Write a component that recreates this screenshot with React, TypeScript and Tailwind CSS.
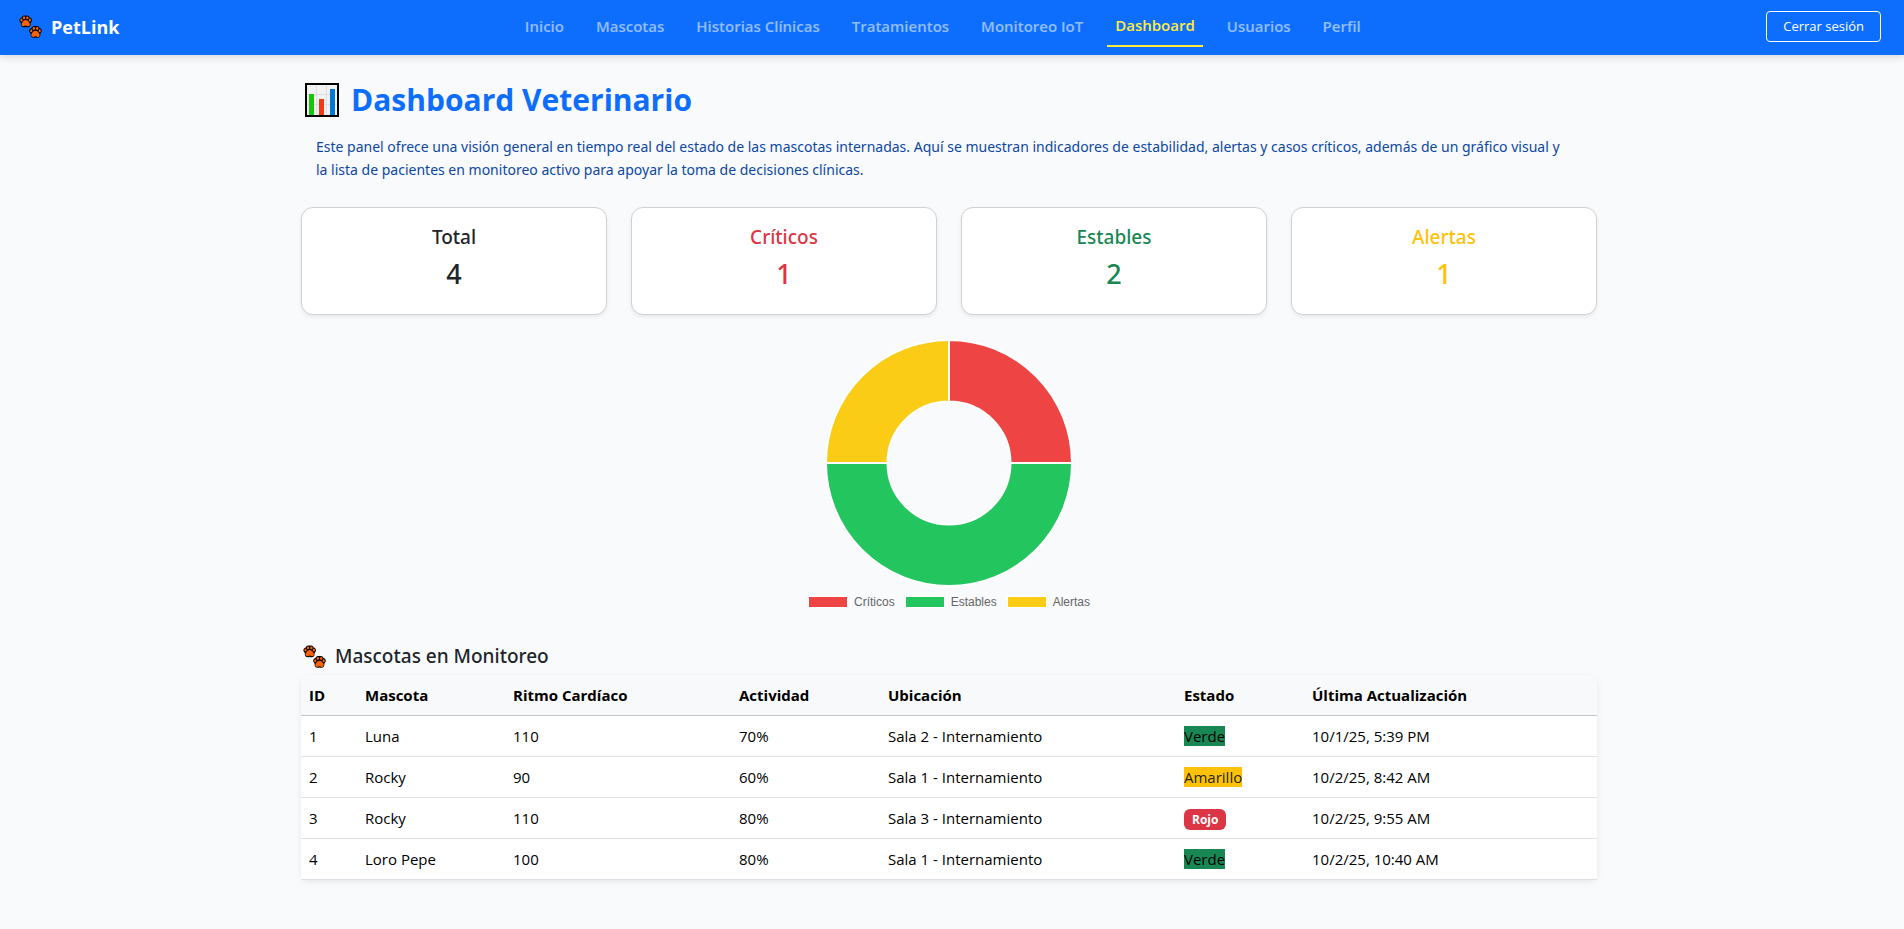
import React from "react";

const navItems = [
  "Inicio",
  "Mascotas",
  "Historias Clínicas",
  "Tratamientos",
  "Monitoreo IoT",
  "Dashboard",
  "Usuarios",
  "Perfil",
];

const stats = [
  { label: "Total", value: 4, color: "text-[#212529]" },
  { label: "Críticos", value: 1, color: "text-[#dc3545]" },
  { label: "Estables", value: 2, color: "text-[#198754]" },
  { label: "Alertas", value: 1, color: "text-[#ffc107]" },
];

const legend = [
  { label: "Críticos", color: "bg-[#ef4444]" },
  { label: "Estables", color: "bg-[#22c55e]" },
  { label: "Alertas", color: "bg-[#facc15]" },
];

const columns = [
  { label: "ID", width: "w-14" },
  { label: "Mascota", width: "w-[148px]" },
  { label: "Ritmo Cardíaco", width: "w-[226px]" },
  { label: "Actividad", width: "w-[149px]" },
  { label: "Ubicación", width: "w-[296px]" },
  { label: "Estado", width: "w-32" },
  { label: "Última Actualización", width: "w-auto" },
];

const pets = [
  { id: 1, name: "Luna", rate: 110, activity: "70%", place: "Sala 2 - Internamiento", state: "Verde", updated: "10/1/25, 5:39 PM" },
  { id: 2, name: "Rocky", rate: 90, activity: "60%", place: "Sala 1 - Internamiento", state: "Amarillo", updated: "10/2/25, 8:42 AM" },
  { id: 3, name: "Rocky", rate: 110, activity: "80%", place: "Sala 3 - Internamiento", state: "Rojo", updated: "10/2/25, 9:55 AM" },
  { id: 4, name: "Loro Pepe", rate: 100, activity: "80%", place: "Sala 1 - Internamiento", state: "Verde", updated: "10/2/25, 10:40 AM" },
];

const stateStyles: Record<string, string> = {
  Verde: "bg-[#198754] text-black",
  Amarillo: "bg-[#ffc107] text-[#212529]",
  Rojo: "inline-block rounded-md bg-[#dc3545] px-2 text-xs leading-[21px] font-bold text-white",
};

function Paw({ x, y }: { x: number; y: number }) {
  return (
    <g transform={`translate(${x} ${y})`}>
      <path
        d="M6.500 .3C5 .1 3 .4 2.500 2.200 .6 2.400-.2 4.500.4 6c.3.900.9 1.300 1.300 1.700-.5 2.200.6 4.300 3 4.300.700 0 1.200-.3 1.800-.3s1.100.3 1.800.3c2.400 0 3.500-2.100 3-4.300.4-.4 1-.8 1.300-1.700.6-1.500-.2-3.600-2.100-3.800C10 .4 8 .1 6.500.3z"
        fill="#000"
      />
      <g fill="#f7630c">
        <ellipse cx="2.300" cy="4.900" rx="1.100" ry="1.500" />
        <ellipse cx="10.700" cy="4.900" rx="1.100" ry="1.500" />
        <ellipse cx="4.800" cy="2.700" rx="1.200" ry="1.400" />
        <ellipse cx="8.200" cy="2.700" rx="1.200" ry="1.400" />
        <path d="M6.500 4.900c-1.800 0-2.700 1.200-3.400 2.400-.6.900-1 1.700-.7 2.600.4 1.200 1.500 1.400 2.400 1 .6-.3 1.100-.5 1.700-.5s1.100.2 1.700.5c.9.4 2 .2 2.400-1 .3-.9-.1-1.700-.7-2.600-.7-1.200-1.600-2.400-3.400-2.400z" />
      </g>
    </g>
  );
}

function Paws() {
  return (
    <svg viewBox="0 0 24 24" className="size-6 shrink-0" aria-hidden="true">
      <Paw x={0.2} y={0.2} />
      <Paw x={10} y={10.8} />
    </svg>
  );
}

function ChartIcon() {
  return (
    <svg viewBox="0 0 34 34" className="size-[34px] shrink-0" aria-hidden="true">
      <rect x="1" y="1" width="32" height="32" fill="#f2f2f2" stroke="#000" strokeWidth="2" />
      <path d="M11.500 2v30M21.500 2v30M2 11.500h30M2 21.500h30" stroke="#dfdfdf" />
      <rect x="4" y="11" width="5" height="21" fill="#16c60c" />
      <rect x="14" y="16" width="5" height="16" fill="#f03a17" />
      <rect x="25" y="6" width="5" height="26" fill="#0078d7" />
    </svg>
  );
}

function Doughnut() {
  return (
    <svg viewBox="0 0 248 248" className="size-[248px]" role="img" aria-label="Críticos, Estables y Alertas">
      <g stroke="#fff" strokeWidth="2">
        <path d="M124 1A123 123 0 0 1 247 124H185.500A61.500 61.500 0 0 0 124 62.500z" fill="#ef4444" />
        <path d="M247 124A123 123 0 0 1 1 124H62.500A61.500 61.500 0 0 0 185.500 124z" fill="#22c55e" />
        <path d="M1 124A123 123 0 0 1 124 1V62.500A61.500 61.500 0 0 0 62.500 124z" fill="#facc15" />
      </g>
    </svg>
  );
}

export default function App() {
  return (
    <div className="min-h-screen bg-[#f8fafc] font-['Open_Sans','Noto_Sans',sans-serif] text-[15px] leading-6 text-[#212529]">
      <header className="flex h-[55px] items-center justify-between bg-[#0d6efd] pr-[23px] pb-0.5 pl-[19px] shadow-[0_2px_8px_rgba(0,0,0,0.15)]">
        <a href="#" className="flex items-center gap-2 text-lg font-bold text-white">
          <Paws />
          PetLink
        </a>
        <nav className="flex items-center gap-4 pb-0.5">
          {navItems.map((item) => (
            <a
              key={item}
              href="#"
              className={
                item === "Dashboard"
                  ? "border-b-2 border-[#ffeb3b] px-2 py-2 font-semibold text-[#ffeb3b]"
                  : "px-2 py-2 font-semibold text-white/55"
              }
            >
              {item}
            </a>
          ))}
        </nav>
        <button type="button" className="rounded border border-white px-4 py-1 text-[13px] leading-[21px] text-white">
          Cerrar sesión
        </button>
      </header>

      <main className="pr-1.5">
        <div className="mx-auto max-w-[1320px] px-3 pt-[25px]">
          <h1 className="flex items-center gap-3 pl-1 text-[30px] leading-10 font-bold text-[#0d6efd]">
            <ChartIcon />
            Dashboard Veterinario
          </h1>
          <p className="mt-[15px] pr-8 pl-[15px] font-['Noto_Sans',sans-serif] text-sm leading-[23px] text-[#0d47a1]">
            Este panel ofrece una visión general en tiempo real del estado de las mascotas internadas. Aquí se muestran
            indicadores de estabilidad, alertas y casos críticos, además de un gráfico visual y la lista de pacientes en
            monitoreo activo para apoyar la toma de decisiones clínicas.
          </p>

          <section className="mt-[26px] grid grid-cols-4 gap-6">
            {stats.map((stat) => (
              <div
                key={stat.label}
                className={`h-[108px] rounded-xl border border-[#d0d1d3] bg-white pt-4 text-center font-['Noto_Sans',sans-serif] shadow-[0_2px_4px_rgba(0,0,0,0.075)] ${stat.color}`}
              >
                <h2 className="text-[19px] leading-[26px] font-medium">{stat.label}</h2>
                <p className="mt-1.5 text-[27px] leading-9 font-medium">{stat.value}</p>
              </div>
            ))}
          </section>

          <section className="mt-6 flex flex-col items-center">
            <Doughnut />
            <ul className="mt-[7px] flex items-center gap-2.5 font-['Liberation_Sans',Arial,sans-serif] text-xs leading-4 text-[#666]">
              {legend.map((entry) => (
                <li key={entry.label} className="flex items-center gap-1.5">
                  <span className={`h-3 w-10 border border-white ${entry.color}`} />
                  {entry.label}
                </li>
              ))}
            </ul>
          </section>

          <section className="mt-[34px] pb-12">
            <h2 className="flex items-center gap-2 pl-0.5 font-['Noto_Sans',sans-serif] text-[19px] leading-[25px] font-medium">
              <Paws />
              Mascotas en Monitoreo
            </h2>
            <table className="mt-1.5 w-full table-fixed border-collapse rounded-lg text-left text-black shadow-[0_2px_6px_rgba(0,0,0,0.08)]">
              <thead className="bg-[#f8f9fa]">
                <tr className="border-b border-[#c4c6c9]">
                  {columns.map((column) => (
                    <th key={column.label} scope="col" className={`p-2 font-bold ${column.width}`}>
                      {column.label}
                    </th>
                  ))}
                </tr>
              </thead>
              <tbody className="bg-white">
                {pets.map((pet) => (
                  <tr key={pet.id} className="border-b border-[#dee2e6]">
                    <td className="p-2">{pet.id}</td>
                    <td className="p-2">{pet.name}</td>
                    <td className="p-2">{pet.rate}</td>
                    <td className="p-2">{pet.activity}</td>
                    <td className="p-2">{pet.place}</td>
                    <td className="p-2">
                      <span className={stateStyles[pet.state]}>{pet.state}</span>
                    </td>
                    <td className="p-2">{pet.updated}</td>
                  </tr>
                ))}
              </tbody>
            </table>
          </section>
        </div>
      </main>
    </div>
  );
}
